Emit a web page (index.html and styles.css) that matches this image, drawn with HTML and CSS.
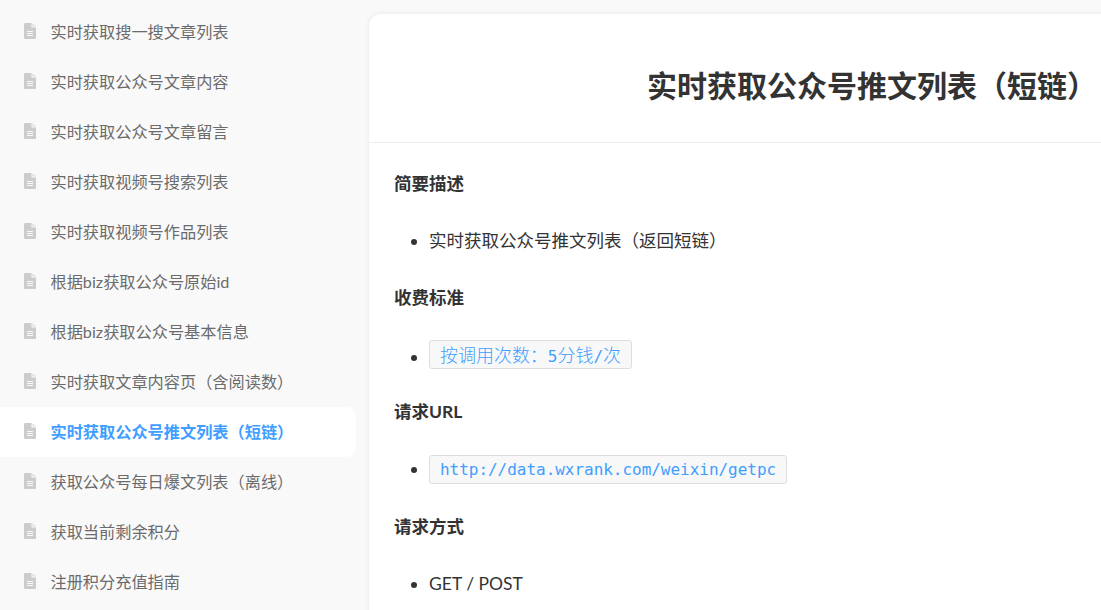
FILE: index.html
```
<!DOCTYPE html>
<html lang="zh-CN">
<head>
<meta charset="utf-8">
<title>实时获取公众号推文列表（短链）</title>
<link rel="stylesheet" href="styles.css">
</head>
<body>
<svg class="defs" width="0" height="0" aria-hidden="true"><symbol id="doc" viewBox="0 0 12 16"><path d="M1 0h6.5v4.5H12V15a1 1 0 0 1-1 1H1a1 1 0 0 1-1-1V1a1 1 0 0 1 1-1z" fill="#ccc"/><path d="M8.5 0.2L12 3.6H8.5z" fill="#ddd"/><path d="M3 8h6v1H3zM3 10h6v1H3zM3 12h6v1H3z" fill="#f9f9f9"/></symbol></svg>
<div class="layout">
  <nav class="sidebar">
    <a class="item"><svg class="doc"><use href="#doc"/></svg><span>实时获取搜一搜文章列表</span></a>
    <a class="item"><svg class="doc"><use href="#doc"/></svg><span>实时获取公众号文章内容</span></a>
    <a class="item"><svg class="doc"><use href="#doc"/></svg><span>实时获取公众号文章留言</span></a>
    <a class="item"><svg class="doc"><use href="#doc"/></svg><span>实时获取视频号搜索列表</span></a>
    <a class="item"><svg class="doc"><use href="#doc"/></svg><span>实时获取视频号作品列表</span></a>
    <a class="item"><svg class="doc"><use href="#doc"/></svg><span>根据biz获取公众号原始id</span></a>
    <a class="item"><svg class="doc"><use href="#doc"/></svg><span>根据biz获取公众号基本信息</span></a>
    <a class="item"><svg class="doc"><use href="#doc"/></svg><span>实时获取文章内容页（含阅读数）</span></a>
    <a class="item active"><svg class="doc"><use href="#doc"/></svg><span>实时获取公众号推文列表（短链）</span></a>
    <a class="item"><svg class="doc"><use href="#doc"/></svg><span>获取公众号每日爆文列表（离线）</span></a>
    <a class="item"><svg class="doc"><use href="#doc"/></svg><span>获取当前剩余积分</span></a>
    <a class="item"><svg class="doc"><use href="#doc"/></svg><span>注册积分充值指南</span></a>
  </nav>
  <main class="card">
    <header class="card-head"><h1>实时获取公众号推文列表（短链）</h1></header>
    <section class="card-body">
      <p class="label">简要描述</p>
      <ul><li>实时获取公众号推文列表（返回短链）</li></ul>
      <p class="label">收费标准</p>
      <ul><li><code><span class="cjk">按调用次数：</span>5<span class="cjk">分钱</span>/<span class="cjk">次</span></code></li></ul>
      <p class="label">请求URL</p>
      <ul><li><code>http://data.wxrank.com/weixin/getpc</code></li></ul>
      <p class="label">请求方式</p>
      <ul><li>GET / POST</li></ul>
    </section>
  </main>
</div>
</body>
</html>
```
FILE: styles.css
```
html, body {
  margin: 0;
  height: 100%;
  overflow: hidden;
  background: #f9f9f9;
}
body {
  font-family: Lato, "Noto Sans CJK SC", sans-serif;
  font-size: 17.5px;
  color: #333;
}
.defs { display: block; height: 0; }
.layout { display: flex; align-items: flex-start; }
.sidebar {
  flex: 0 0 356px;
  padding-top: 7px;
}
.item {
  display: flex;
  align-items: center;
  height: 50px;
  padding-left: 24px;
  box-sizing: border-box;
  color: #6b6b6b;
  font-size: 16.2px;
  line-height: 50px;
  border-radius: 0 10px 10px 0;
}
.item.active {
  background: #fff;
  color: #409eff;
  font-weight: 700;
}
.doc {
  flex: 0 0 12px;
  width: 12px;
  height: 16px;
  margin-right: 14.5px;
  margin-top: -2px;
}
.card {
  flex: 0 0 1006px;
  margin: 14px 0 0 13px;
  background: #fff;
  border-radius: 12px 12px 0 0;
  box-shadow: 0 0 5px rgba(0, 0, 0, 0.08);
  height: 700px;
}
.card-head {
  height: 128px;
  border-bottom: 1px solid #eee;
  display: flex;
  align-items: center;
  justify-content: center;
}
h1 {
  margin: 14px 0 0;
  font-size: 30px;
  font-weight: 700;
  line-height: 1.2;
}
.card-body { padding: 26.8px 25px 0; }
.label {
  margin: 0;
  font-weight: 700;
  line-height: 28px;
  height: 28px;
}
ul {
  margin: 28px 0 29.3px;
  padding-left: 35px;
  line-height: 29px;
}
li { height: 29px; }
code {
  display: inline-block;
  font-family: "DejaVu Sans Mono", "Noto Sans CJK SC", monospace;
  font-size: 16px;
  letter-spacing: -0.03px;
  line-height: 27px;
  height: 27px;
  vertical-align: 0.5px;
  padding: 0 10px;
  color: #409eff;
  background: #f8f8f8;
  border: 1px solid #ddd;
  border-radius: 3px;
}
.cjk {
  font-family: "Noto Sans CJK SC", sans-serif;
  font-size: 18px;
  font-weight: 300;
}
```
